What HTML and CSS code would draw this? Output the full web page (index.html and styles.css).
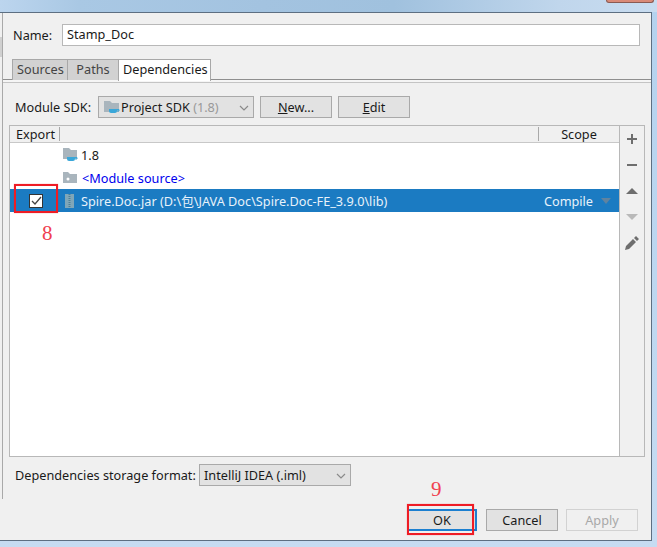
FILE: index.html
```html
<!DOCTYPE html>
<html lang="en">
<head>
<meta charset="UTF-8">
<title>Project Structure</title>
<link rel="stylesheet" href="styles.css">
</head>
<body>

<div class="titlebar"><div class="close-hint"></div></div>

<div class="dialog">
    <div class="panel">
        <div class="name-row">
            <span class="name-label">Name:</span>
            <div class="name-input">Stamp_Doc</div>
        </div>

        <div class="tabs">
            <div class="tab">Sources</div>
            <div class="tab">Paths</div>
            <div class="tab active">Dependencies</div>
        </div>
        <div class="tabs-rule"></div>

        <div class="sdk-row">
            <span class="sdk-label">Module SDK:</span>
            <div class="combo sdk-combo">
                <svg class="row-icon" width="16" height="16" viewBox="0 0 16 16">
                    <path d="M0 2h6l2 2h7v9H0z" fill="#a9b5bd"/>
                    <path d="M5 10h8v2a2 2 0 0 1-2 2H7a2 2 0 0 1-2-2z" fill="#3aa7d9"/>
                    <path d="M13 10.500h2v1.500h-2" fill="none" stroke="#3aa7d9"/>
                </svg>
                <span>Project SDK <span class="muted">(1.8)</span></span>
                <svg class="chevron" width="10" height="6" viewBox="0 0 10 6"><path d="M1 1l4 4 4-4" fill="none" stroke="#8a8a8a" stroke-width="1.200"/></svg>
            </div>
            <div class="btn new-btn"><span><u>N</u>ew...</span></div>
            <div class="btn edit-btn"><span><u>E</u>dit</span></div>
        </div>

        <div class="table-wrap">
            <div class="table">
                <div class="table-head">
                    <div class="col-export">Export</div>
                    <div class="col-name"></div>
                    <div class="col-scope">Scope</div>
                </div>
                <div class="table-row">
                    <div class="cell-check"></div>
                    <svg class="row-icon" width="16" height="16" viewBox="0 0 16 16">
                        <path d="M1 1h6l2 2h6v9H1z" fill="#a9b5bd"/>
                        <path d="M5 10h8v2a2 2 0 0 1-2 2H7a2 2 0 0 1-2-2z" fill="#3aa7d9"/>
                        <path d="M13 10.500h2v1.500h-2" fill="none" stroke="#3aa7d9"/>
                    </svg>
                    <span>1.8</span>
                </div>
                <div class="table-row source-row">
                    <div class="cell-check"></div>
                    <svg class="row-icon" width="16" height="16" viewBox="0 0 16 16">
                        <path d="M1 2h5l2 2h7v9H1z" fill="#a9b5bd"/>
                        <circle cx="6" cy="9" r="1.500" fill="#fff"/>
                    </svg>
                    <span>&lt;Module source&gt;</span>
                </div>
                <div class="table-row selected">
                    <div class="cell-check"><div class="checkbox">
                        <svg width="11" height="9" viewBox="0 0 11 9"><path d="M1 5l3 3 6-7" fill="none" stroke="#444" stroke-width="1.300"/></svg>
                    </div></div>
                    <svg class="row-icon jar-icon" width="16" height="16" viewBox="0 0 16 16">
                        <rect x="3" y="1" width="9" height="14" fill="#7fa6b8"/>
                        <path d="M7.500 1v14" stroke="#4f7f96" stroke-width="2" stroke-dasharray="1 1"/>
                    </svg>
                    <span class="lib-name">Spire.Doc.jar (D:\包\JAVA Doc\Spire.Doc-FE_3.9.0\lib)</span>
                    <span class="scope-value">Compile</span>
                    <svg class="scope-arrow" width="10" height="6" viewBox="0 0 10 6"><path d="M0 0h10L5 6z" fill="#5f83a0"/></svg>
                </div>
            </div>
            <div class="toolbar">
                <svg width="14" height="14" viewBox="0 0 14 14"><path d="M7 2v10M2 7h10" stroke="#6e6e6e" stroke-width="2"/></svg>
                <svg width="14" height="14" viewBox="0 0 14 14"><path d="M2 7h10" stroke="#6e6e6e" stroke-width="2"/></svg>
                <svg width="14" height="14" viewBox="0 0 14 14"><path d="M1 10L7 4l6 6z" fill="#6e6e6e"/></svg>
                <svg width="14" height="14" viewBox="0 0 14 14"><path d="M1 4l6 6 6-6z" fill="#b9b9b9"/></svg>
                <svg width="14" height="14" viewBox="0 0 14 14"><path d="M0 14l1-4 7-7 3 3-7 7zM9 2l2-2 3 3-2 2z" fill="#6e6e6e"/></svg>
            </div>
        </div>

        <div class="format-row">
            <span class="format-label">Dependencies storage format:</span>
            <div class="combo format-combo">
                <span>IntelliJ IDEA (.iml)</span>
                <svg class="chevron" width="10" height="6" viewBox="0 0 10 6"><path d="M1 1l4 4 4-4" fill="none" stroke="#8a8a8a" stroke-width="1.200"/></svg>
            </div>
        </div>
    </div>

    <div class="footer">
        <div class="btn dialog-btn ok-btn">OK</div>
        <div class="btn dialog-btn">Cancel</div>
        <div class="btn dialog-btn disabled">Apply</div>
    </div>
</div>
<div class="bottom-strip"></div>

<!-- edge of the sidebar's selected row, and the red marks over the screenshot -->
<div class="side-sel"></div>
<div class="mark mark-check"></div>
<div class="mark mark-ok"></div>
<div class="mark-num num-8">8</div>
<div class="mark-num num-9">9</div>

</body>
</html>
```

FILE: styles.css
```css
html, body {
    margin: 0;
    padding: 0;
}
body {
    position: relative;
    width: 657px;
    height: 547px;
    overflow: hidden;
    display: flex;
    flex-direction: column;
    font-family: "Noto Sans", "Noto Sans CJK SC", sans-serif;
    font-size: 12.7px;
    color: #1a1a1a;
    background: linear-gradient(180deg, #b4d2ee, #c6dcf2);
}
.titlebar {
    position: relative;
    height: 12px;
    flex: none;
    background: linear-gradient(90deg, #bcd5ee 0%, #a9c8e4 12%, #a3c3e0 40%, #a0c1de 60%, #c0d6ec 85%, #c8dcf0 100%);
}
.close-hint {
    position: absolute;
    left: 606px;
    top: 0;
    width: 46px;
    height: 2px;
    background: #d98a78;
    border: 1px solid #8a5a52;
    border-top: none;
    border-radius: 0 0 3px 3px;
}
.dialog {
    width: 651px;
    height: 527px;
    flex: none;
    background: #f0f0f0;
    border-top: 1px solid #5d6f82;
    border-right: 1px solid #5d6f82;
    border-bottom: 1px solid #5d6f82;
    display: flex;
    flex-direction: column;
}
.panel {
    height: 486px;
    flex: none;
    margin-left: 2px;
    border-left: 1px solid #a9a9a9;
}
.side-sel {
    position: absolute;
    left: 0;
    top: 37px;
    width: 2px;
    height: 20px;
    background: #d0d0d0;
}
.name-row {
    display: flex;
    align-items: center;
    height: 22px;
    margin-top: 11px;
    padding-left: 10px;
}
.name-label {
    width: 49px;
    line-height: 20px;
}
.name-input {
    width: 572px;
    height: 20px;
    line-height: 19px;
    padding-left: 4px;
    background: #fff;
    border: 1px solid #b8b8b8;
}
.tabs {
    display: flex;
    height: 20px;
    margin-top: 13px;
    padding-left: 9px;
}
.tab {
    height: 20px;
    line-height: 19px;
    padding: 0 4px;
    margin-left: -1px;
    text-align: center;
    color: #444;
    background: #d2d2d2;
    border: 1px solid #a8a8a8;
    border-bottom: none;
}
.tab:nth-child(1) { width: 46px; margin-left: 0; }
.tab:nth-child(2) { width: 42px; }
.tab.active {
    width: 83px;
    color: #1a1a1a;
    background: #fff;
    position: relative;
    height: 21px;
}
.tabs-rule {
    height: 2px;
    border-top: 1px solid #8f8f8f;
    border-bottom: 1px solid #c4c4c4;
    background: #f5f5f5;
}
.sdk-row {
    display: flex;
    align-items: center;
    height: 22px;
    margin-top: 13px;
    padding-left: 12px;
}
.sdk-label {
    width: 83px;
}
.combo {
    display: flex;
    align-items: center;
    height: 20px;
    background: #e2e2e2;
    border: 1px solid #a9a9a9;
    position: relative;
}
.chevron {
    position: absolute;
    right: 4px;
    top: 8px;
}
.muted {
    color: #999;
}
.sdk-combo {
    width: 154px;
    gap: 1px;
}
.sdk-combo .row-icon {
    margin-left: 5px;
}
.btn {
    display: flex;
    align-items: center;
    justify-content: center;
    height: 20px;
    background: #e2e2e2;
    border: 1px solid #a9a9a9;
}
.new-btn {
    width: 70px;
    margin-left: 6px;
}
.edit-btn {
    width: 70px;
    margin-left: 6px;
}
.table-wrap {
    display: flex;
    height: 332px;
    margin-top: 7px;
    margin-left: 6px;
    width: 636px;
    border: 1px solid #b8b8b8;
    box-sizing: border-box;
}
.table {
    width: 609px;
    background: #fff;
    flex: none;
}
.toolbar {
    flex: 1;
    border-left: 1px solid #b8b8b8;
    background: #f0f0f0;
    display: flex;
    flex-direction: column;
    align-items: center;
    gap: 12px;
    padding-top: 6px;
}
.table-head {
    display: flex;
    height: 16px;
    align-items: center;
    background: #f0f0f0;
    border-bottom: 1px solid #c8c8c8;
}
.col-export {
    width: 43px;
    padding-left: 6px;
    border-right: 1px solid #a9a9a9;
    height: 14px;
    line-height: 14px;
}
.col-name {
    flex: 1;
}
.col-scope {
    width: 80px;
    text-align: center;
    border-left: 1px solid #a9a9a9;
    height: 14px;
    line-height: 14px;
}
.table-row {
    display: flex;
    align-items: center;
    height: 23px;
}
.cell-check {
    width: 52px;
    flex: none;
    display: flex;
    justify-content: center;
}
.row-icon {
    flex: none;
}
.table-row span {
    margin-left: 3px;
}
.source-row span {
    color: #0000ee;
    margin-left: 4px;
}
.selected {
    background: #1b7bc2;
    color: #e8f2fa;
}
.checkbox {
    width: 12px;
    height: 12px;
    background: #fff;
    border: 1px solid #333;
    display: flex;
    align-items: center;
    justify-content: center;
}
.lib-name {
    flex: 1;
}
.scope-arrow {
    margin-left: 8px;
    margin-right: 8px;
}
.format-row {
    display: flex;
    align-items: center;
    height: 22px;
    margin-top: 7px;
    padding-left: 12px;
}
.format-label {
    width: 184px;
    white-space: nowrap;
}
.format-combo {
    width: 152px;
    padding-left: 4px;
    box-sizing: border-box;
    height: 22px;
}
.footer {
    flex: 1;
    display: flex;
    justify-content: flex-end;
    gap: 8px;
    padding: 10px 13px 0 0;
}
.dialog-btn {
    width: 70px;
    height: 19px;
    padding-bottom: 1px;
}
.ok-btn {
    border: 2px solid #1b7fd0;
    width: 66px;
    height: 17px;
    margin-right: 1px;
}
.disabled {
    color: #a8a8a8;
    background: #f0f0f0;
    border-color: #d2d2d2;
}
.mark {
    position: absolute;
    border: 2px solid #ee1c25;
    box-sizing: border-box;
    box-shadow: 0 0 1px rgba(238, 28, 37, 0.5);
}
.mark-check {
    left: 14px;
    top: 184px;
    width: 44px;
    height: 29px;
}
.mark-ok {
    left: 407px;
    top: 504px;
    width: 67px;
    height: 31px;
}
.mark-num {
    position: absolute;
    font-family: "Liberation Serif", serif;
    font-size: 21px;
    line-height: 20px;
    color: #f0414f;
}
.num-8 {
    left: 42px;
    top: 223px;
}
.num-9 {
    left: 431px;
    top: 479px;
}
```
